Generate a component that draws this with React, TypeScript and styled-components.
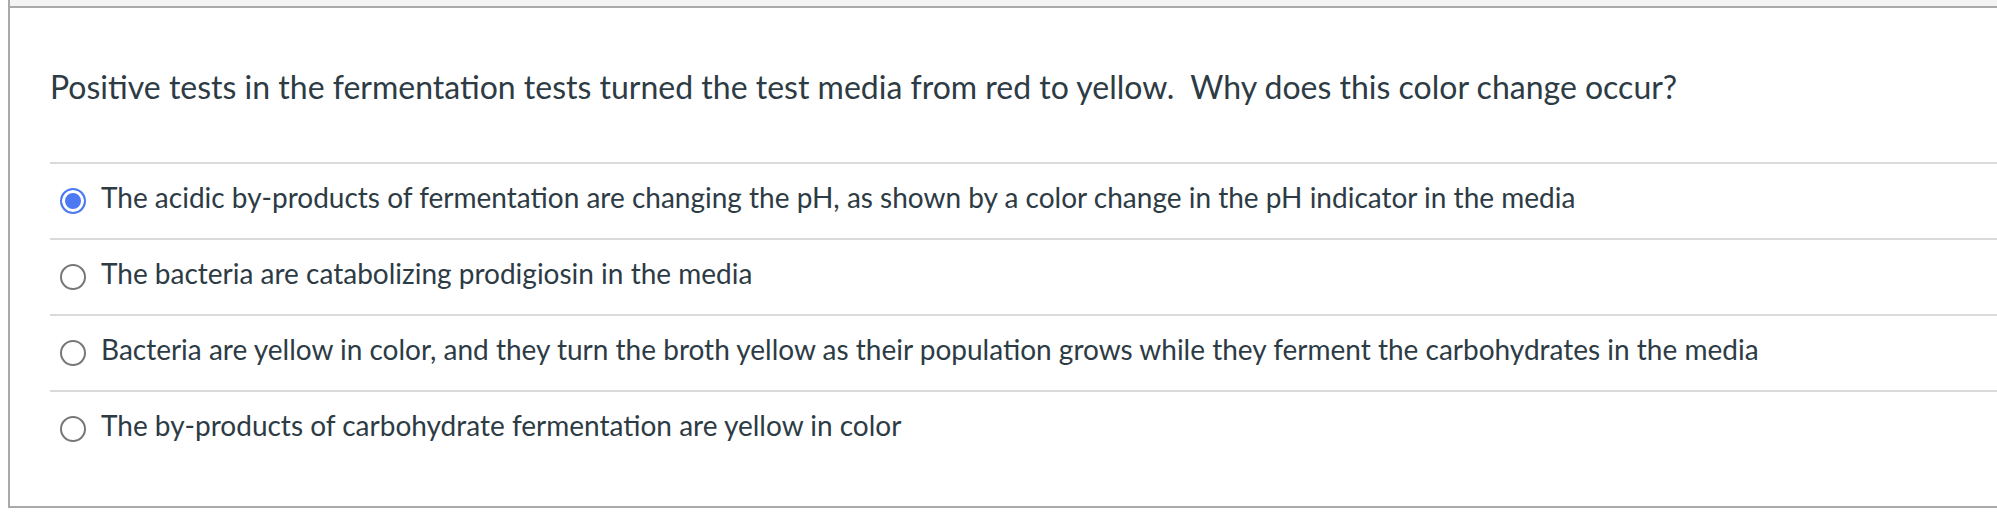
import styled, { createGlobalStyle } from "styled-components";

const GlobalStyle = createGlobalStyle`
  html, body {
    margin: 0;
    padding: 0;
    background: #fff;
  }
  body {
    font-family: Lato, "Liberation Sans", sans-serif;
    color: #2d3b45;
  }
`;

const Page = styled.div`
  padding-left: 8px;
  height: 515px;
  box-sizing: border-box;
`;

const Frame = styled.div`
  border-left: 2px solid #a9a9a9;
  border-bottom: 2px solid #a9a9a9;
  height: 508px;
  box-sizing: border-box;
  display: flex;
  flex-direction: column;
`;

const TopStrip = styled.div`
  height: 6px;
  background: #f4f4f4;
  border-bottom: 2px solid #a9a9a9;
`;

const Body = styled.div`
  padding: 57px 0 0 40px;
`;

const Question = styled.p`
  margin: 0 0 53px;
  font-size: 32px;
  line-height: 44px;
`;

const Options = styled.div`
  display: flex;
  flex-direction: column;
`;

const Row = styled.label`
  display: flex;
  align-items: center;
  height: 76px;
  box-sizing: border-box;
  border-top: 2px solid #dadada;
  padding-left: 10px;
  gap: 15px;
`;

const Radio = styled.span<{ $checked?: boolean }>`
  flex: none;
  width: 26px;
  height: 26px;
  border-radius: 50%;
  box-sizing: border-box;
  border: 2px solid ${(p) => (p.$checked ? "#4d7af2" : "#777")};
  background: ${(p) => (p.$checked ? "#4d7af2" : "#fff")};
  box-shadow: ${(p) => (p.$checked ? "inset 0 0 0 3px #fff" : "none")};
`;

const Answer = styled.span`
  font-size: 28px;
  line-height: 36px;
  padding-bottom: 9px;
`;

const answers = [
  "The acidic by-products of fermentation are changing the pH, as shown by a color change in the pH indicator in the media",
  "The bacteria are catabolizing prodigiosin in the media",
  "Bacteria are yellow in color, and they turn the broth yellow as their population grows while they ferment the carbohydrates in the media",
  "The by-products of carbohydrate fermentation are yellow in color",
];

const App = () => {
  const selected = 0;
  return (
    <Page>
      <GlobalStyle />
      <Frame>
        <TopStrip />
        <Body>
          <Question>
            Positive tests in the fermentation tests turned the test media from red to yellow.&nbsp; Why does this color change occur?
          </Question>
          <Options>
            {answers.map((a, i) => (
              <Row key={i}>
                <Radio $checked={i === selected} />
                <Answer>{a}</Answer>
              </Row>
            ))}
          </Options>
        </Body>
      </Frame>
    </Page>
  );
};

export default App;
